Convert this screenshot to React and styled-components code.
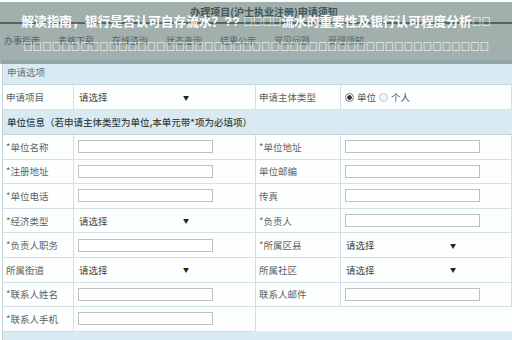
import React from 'react';
import styled, { createGlobalStyle } from 'styled-components';

const GlobalStyle = createGlobalStyle`
  html, body {
    margin: 0;
    padding: 0;
    background: #ffffff;
  }
  body {
    width: 512px;
    height: 340px;
    overflow: hidden;
  }
`;

// characters no installed font has: they show as empty boxes, as in the picture
const BOX = '\u{10FFFD}';

const rows = [
  [{ label: '*单位名称', kind: 'input' }, { label: '*单位地址', kind: 'input' }],
  [{ label: '*注册地址', kind: 'input' }, { label: '单位邮编', kind: 'input' }],
  [{ label: '*单位电话', kind: 'input' }, { label: '传真', kind: 'input' }],
  [{ label: '*经济类型', kind: 'select' }, { label: '*负责人', kind: 'input' }],
  [{ label: '*负责人职务', kind: 'input' }, { label: '*所属区县', kind: 'select' }],
  [{ label: '所属街道', kind: 'select' }, { label: '所属社区', kind: 'select' }],
  [{ label: '*联系人姓名', kind: 'input' }, { label: '联系人邮件', kind: 'input' }],
  [{ label: '*联系人手机', kind: 'input' }, null],
];

const tabs = ['办事指南', '表格下载', '在线咨询', '状态查询', '结果公示', '常见问题', '受理须知'];

const Field = ({ kind }) => {
  if (kind === 'select') {
    return (
      <Cell>
        <Select>
          <span>请选择</span>
          <Arrow>▼</Arrow>
        </Select>
      </Cell>
    );
  }
  return (
    <Cell>
      <TextBox />
    </Cell>
  );
};

const App = () => {
  return (
    <>
      <GlobalStyle />
      <Frame>
        <PageHead>
          <PageTitle>办理项目(沪士执业注册)申请须知</PageTitle>
          <TabBar>
            {tabs.map((t) => (
              <Tab key={t}>{t}</Tab>
            ))}
          </TabBar>
        </PageHead>

        <FormTable>
          <BandRow $h={25}>申请选项</BandRow>

          <LabelCell $h={25}>申请项目</LabelCell>
          <Cell>
            <Select>
              <span>请选择</span>
              <Arrow>▼</Arrow>
            </Select>
          </Cell>
          <LabelCell>申请主体类型</LabelCell>
          <Cell>
            <RadioGroup>
              <Radio $checked />
              <span>单位</span>
              <Radio />
              <span>个人</span>
            </RadioGroup>
          </Cell>

          <BandRow $h={25} $strong>单位信息（若申请主体类型为单位,本单元带*项为必填项）</BandRow>

          {rows.map(([left, right]) => (
            <React.Fragment key={left.label}>
              <LabelCell $h={24.6}>{left.label}</LabelCell>
              <Field kind={left.kind} />
              {right ? (
                <>
                  <LabelCell>{right.label}</LabelCell>
                  <Field kind={right.kind} />
                </>
              ) : (
                <EmptyCell />
              )}
            </React.Fragment>
          ))}

          <BandRow $h={20} />
        </FormTable>

        <Overlay>
          <Headline>解读指南，银行是否认可自存流水？?? {BOX.repeat(4)}流水的重要性及银行认可程度分析{BOX.repeat(2)}</Headline>
          <Headline>{BOX.repeat(49)}</Headline>
        </Overlay>
      </Frame>
    </>
  );
};

const Frame = styled.div`
  position: relative;
  width: 512px;
  height: 340px;
  overflow: hidden;
  background: #fdfefe;
  font-family: "Noto Sans CJK SC", "Liberation Sans", sans-serif;
`;

const PageHead = styled.div`
  height: 60px;
  display: flex;
  flex-direction: column;
`;

const PageTitle = styled.div`
  height: 22px;
  padding: 2px 0 0 16px;
  box-sizing: border-box;
  text-align: center;
  font-size: 10px;
  line-height: 20px;
  font-weight: 700;
  color: #2c3634;
`;

const TabBar = styled.div`
  border-top: 2px solid #4c5a58;
  display: flex;
  padding: 10px 0 0 4px;
  font-size: 9px;
  color: #556;
`;

const Tab = styled.span`
  width: 54px;
  white-space: nowrap;
`;

const FormTable = styled.div`
  margin-left: 2px;
  border-left: 1px solid #c3d3d8;
  display: grid;
  grid-template-columns: 71px 182px 85px 1fr;
  font-size: 9.5px;
  color: #5b6463;
`;

const BandRow = styled.div`
  grid-column: 1 / -1;
  height: ${(p) => p.$h}px;
  box-sizing: border-box;
  padding: 0 4px;
  display: flex;
  align-items: center;
  background: #d9eaf2;
  border-bottom: 1px solid #c3d6dd;
  color: ${(p) => (p.$strong ? '#3a4444' : '#6a7372')};
  font-weight: ${(p) => (p.$strong ? 500 : 400)};
  white-space: nowrap;
`;

const Cell = styled.div`
  box-sizing: border-box;
  display: flex;
  align-items: center;
  padding-left: 4px;
  border-bottom: 1px solid #d2e1e5;
  border-right: 1px solid #cfdee3;
  background: #fdfefe;
`;

const LabelCell = styled(Cell)`
  height: ${(p) => (p.$h ? `${p.$h}px` : 'auto')};
  padding-left: 3px;
  white-space: nowrap;
  color: #5b6463;
`;

const EmptyCell = styled.div`
  grid-column: 3 / -1;
  border-bottom: 1px solid #e4edef;
  background: #fdfefe;
`;

const TextBox = styled.div`
  width: 135px;
  height: 13px;
  box-sizing: border-box;
  border: 1px solid #bcc2c1;
  background: #ffffff;
`;

const Select = styled.div`
  width: 110px;
  display: flex;
  justify-content: space-between;
  align-items: center;
  padding-left: 1px;
  color: #3e4645;
`;

const Arrow = styled.span`
  font-size: 6px;
  color: #222;
`;

const RadioGroup = styled.div`
  display: flex;
  align-items: center;
  gap: 3px;
  color: #4a5352;
`;

const Radio = styled.span`
  width: 7px;
  height: 7px;
  border-radius: 50%;
  border: 1px solid ${(p) => (p.$checked ? '#777' : '#c4c9c9')};
  background: ${(p) =>
    p.$checked ? 'radial-gradient(circle, #333 0 2px, #fff 2.5px)' : '#f3f5f5'};
`;

const Overlay = styled.div`
  position: absolute;
  top: 2px;
  left: 0;
  right: 0;
  height: 62px;
  padding-top: 8px;
  box-sizing: border-box;
  background: rgba(88, 112, 106, 0.55);
  font-family: "Liberation Sans", "Noto Sans CJK SC", sans-serif;
  font-size: 12.7px;
  font-weight: 700;
  line-height: 25px;
  color: #ffffff;
  text-align: center;
`;

const Headline = styled.div`
  white-space: nowrap;
  overflow: hidden;
`;

export default App;
